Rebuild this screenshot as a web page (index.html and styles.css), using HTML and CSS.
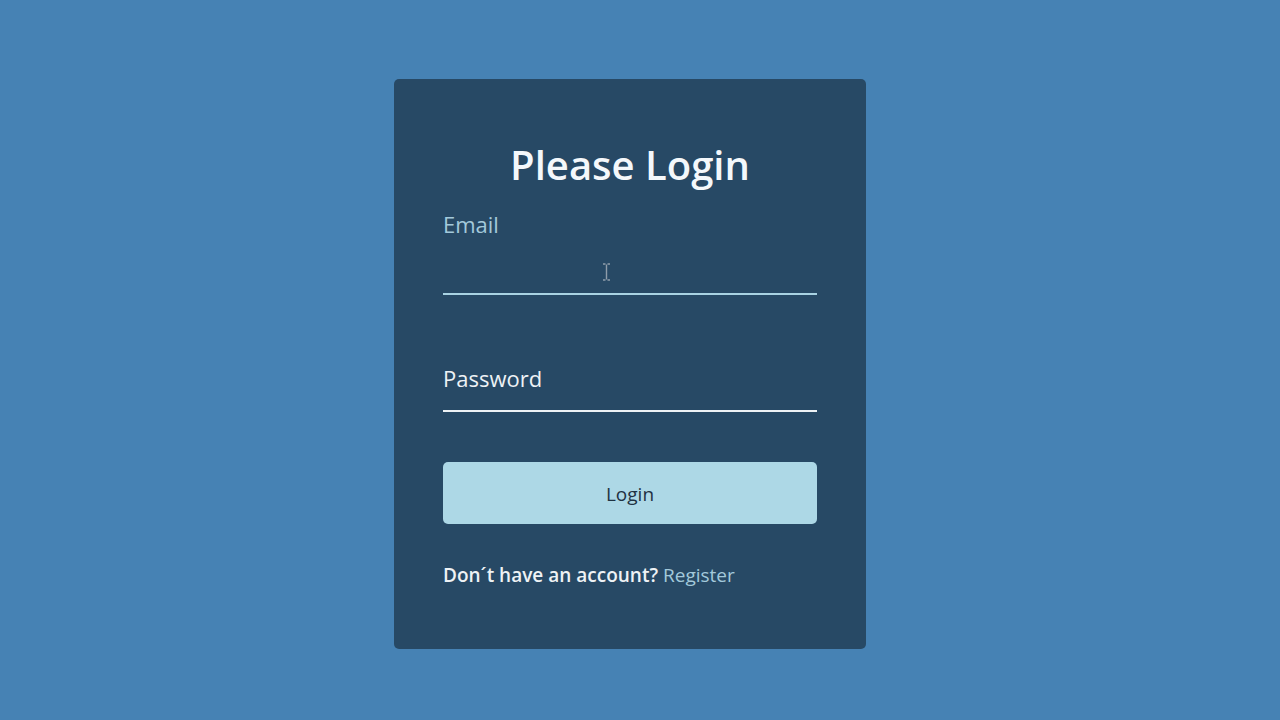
FILE: index.html
```html
<!DOCTYPE html>
<html lang="en">
<head>
  <meta charset="UTF-8">
  <title>Please Login</title>
  <link rel="stylesheet" href="styles.css">
</head>
<body>

  <div class="container">
    <h1>Please Login</h1>

    <form>
      <!-- email field, label floated up -->
      <div class="form-control">
        <input type="text" class="active" required>
        <label class="up">Email</label>
        <svg class="ibeam" width="9" height="18" viewBox="0 0 9 18">
          <path d="M1 1h2.5M5.5 1H8M4.5 1.5v15M1 17h2.5M5.5 17H8" stroke="#8f9daa" stroke-width="1.4" fill="none"/>
        </svg>
      </div>

      <!-- password field, label resting on the line -->
      <div class="form-control">
        <input type="password" required>
        <label>Password</label>
      </div>

      <button class="btn" type="button">Login</button>

      <p class="text">Don´t have an account? <a href="#">Register</a></p>
    </form>
  </div>

</body>
</html>
```

FILE: styles.css
```css
* {
  box-sizing: border-box;
}

body {
  margin: 0;
  padding: 7px 20px 0 0;
  min-height: 100vh;
  background-color: steelblue;
  color: #fff;
  font-family: 'Open Sans', sans-serif;
  display: flex;
  justify-content: center;
  align-items: center;
}

.container {
  width: 472px;
  background-color: rgba(0, 0, 0, 0.44);
  padding: 62px 49px 62px;
  border-radius: 5px;
}

.container h1 {
  margin: 0 0 22px;
  text-align: center;
  font-size: 40px;
  line-height: 48px;
  font-weight: 600;
  color: #f4f8fb;
}

.form-control {
  position: relative;
  padding-top: 26px;
  margin-bottom: 33px;
}

.form-control + .form-control {
  margin-bottom: 0;
}

.form-control input {
  display: block;
  width: 100%;
  height: 58px;
  padding: 0;
  background: transparent;
  border: 0;
  border-bottom: 2px solid #eef2f5;
  color: #fff;
  font-size: 18px;
  outline: none;
}

.form-control input.active {
  border-bottom-color: #a9d3e3;
}

.form-control label {
  position: absolute;
  left: 0;
  top: 37px;
  font-size: 22px;
  line-height: 26px;
  color: #eef2f5;
  pointer-events: none;
}

.form-control label.up {
  top: 0;
  color: #a3c9db;
}

.ibeam {
  position: absolute;
  left: 159px;
  top: 52px;
}

.btn {
  display: block;
  width: 100%;
  height: 62px;
  margin-top: 50px;
  padding: 3px 0 0;
  background: #add8e6;
  color: #1f3242;
  border: 0;
  border-radius: 5px;
  font-family: inherit;
  font-size: 19px;
  cursor: pointer;
}

.text {
  margin: 39px 0 0;
  font-size: 19px;
  line-height: 24px;
  font-weight: 600;
  color: #eef2f5;
}

.text a {
  color: #a3c9db;
  font-weight: 400;
  text-decoration: none;
}
```
